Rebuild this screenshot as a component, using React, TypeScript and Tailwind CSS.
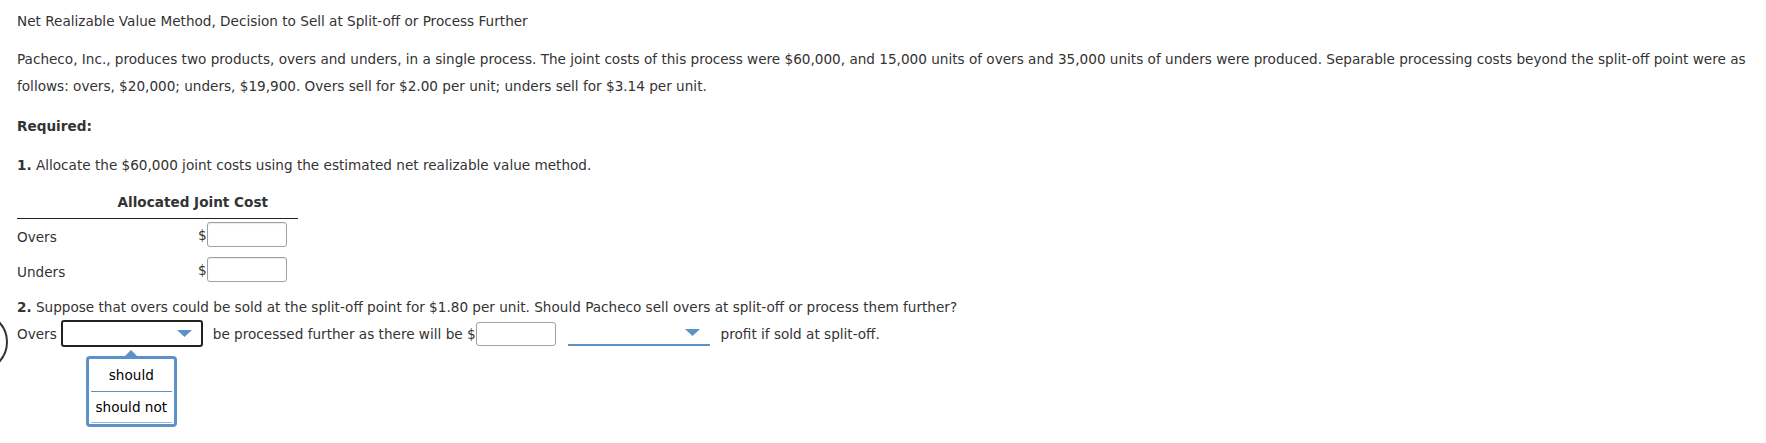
import React from 'react';

const BLUE = '#5b93c8';

function Money() {
  return (
    <div className="flex items-center">
      <span className="leading-[20px]">$</span>
      <div className="w-[80px] h-[25px] border border-[#a0a0a0] rounded-[3px] bg-white shadow-[inset_0_1px_1px_rgba(0,0,0,0.08)]" />
    </div>
  );
}

function Caret() {
  return (
    <svg width="15" height="8" viewBox="0 0 15 8" className="shrink-0">
      <path d="M0 0 L15 0 L7.5 7 Z" fill={BLUE} />
    </svg>
  );
}

export default function App() {
  return (
    <div
      className="relative min-h-[443px] w-full overflow-hidden bg-white px-[17px] pt-[11px] text-[13.6px] text-[#333]"
      style={{ fontFamily: '"DejaVu Sans", Verdana, sans-serif' }}
    >
      {/* partial circle on the left edge */}
      <div className="absolute left-[-52px] top-[312px] h-[60px] w-[60px] rounded-full border-2 border-[#333]" />

      <p className="leading-[20px]">Net Realizable Value Method, Decision to Sell at Split-off or Process Further</p>

      <p className="mt-[15px] leading-[27px] whitespace-nowrap">
        Pacheco, Inc., produces two products, overs and unders, in a single process. The joint costs of this process were $60,000, and 15,000 units of overs and 35,000 units of unders were produced. Separable processing costs beyond the split-off point were as
        <br />
        follows: overs, $20,000; unders, $19,900. Overs sell for $2.00 per unit; unders sell for $3.14 per unit.
      </p>

      <p className="mt-[16px] leading-[20px] font-bold">Required:</p>

      <p className="mt-[19px] leading-[20px]">
        <span className="font-bold">1.</span> Allocate the $60,000 joint costs using the estimated net realizable value method.
      </p>

      <div className="mt-[17px] w-[281px]">
        <div className="border-b border-[#222] pb-[6px] pr-[30px] text-right font-bold leading-[20px]">Allocated Joint Cost</div>
        <div className="mt-[3px] flex items-end">
          <span className="w-[181px] leading-[20px]">Overs</span>
          <Money />
        </div>
        <div className="mt-[10px] flex items-end">
          <span className="w-[181px] leading-[20px]">Unders</span>
          <Money />
        </div>
      </div>

      <p className="mt-[15px] leading-[20px]">
        <span className="font-bold">2.</span> Suppose that overs could be sold at the split-off point for $1.80 per unit. Should Pacheco sell overs at split-off or process them further?
      </p>

      <div className="mt-[3px] flex items-center whitespace-nowrap">
        <span className="leading-[20px]">Overs</span>
        <div className="relative ml-[4px] mr-[10px]">
          <div className="flex h-[27px] w-[142px] items-center justify-end rounded-[3px] border-2 border-[#222] pr-[9px]">
            <Caret />
          </div>
          {/* open dropdown */}
          <div className="absolute left-[25px] top-[36px] w-[91px] rounded-[4px] border-[3px] border-[#5b93c8] bg-white px-[2px] text-black">
            <div className="absolute left-1/2 top-[-9px] h-0 w-0 -translate-x-1/2 border-x-[7px] border-b-[7px] border-x-transparent border-b-[#5b93c8]" />
            <div className="flex h-[33px] items-center justify-center border-b border-[#5b93c8] leading-[20px]">should</div>
            <div className="flex h-[31px] items-center justify-center border-b border-[#9bbbe0] leading-[20px]">should not</div>
            <div className="h-[1px]" />
          </div>
        </div>
        <span className="leading-[20px]">be processed further as there will be $</span>
        <div className="w-[80px] h-[24px] border border-[#a0a0a0] rounded-[3px] bg-white" />
        <div className="ml-[12px] mr-[11px] flex h-[24px] w-[142px] items-center justify-end border-b-2 border-[#5b93c8] pr-[10px]">
          <Caret />
        </div>
        <span className="leading-[20px]">profit if sold at split-off.</span>
      </div>
    </div>
  );
}
